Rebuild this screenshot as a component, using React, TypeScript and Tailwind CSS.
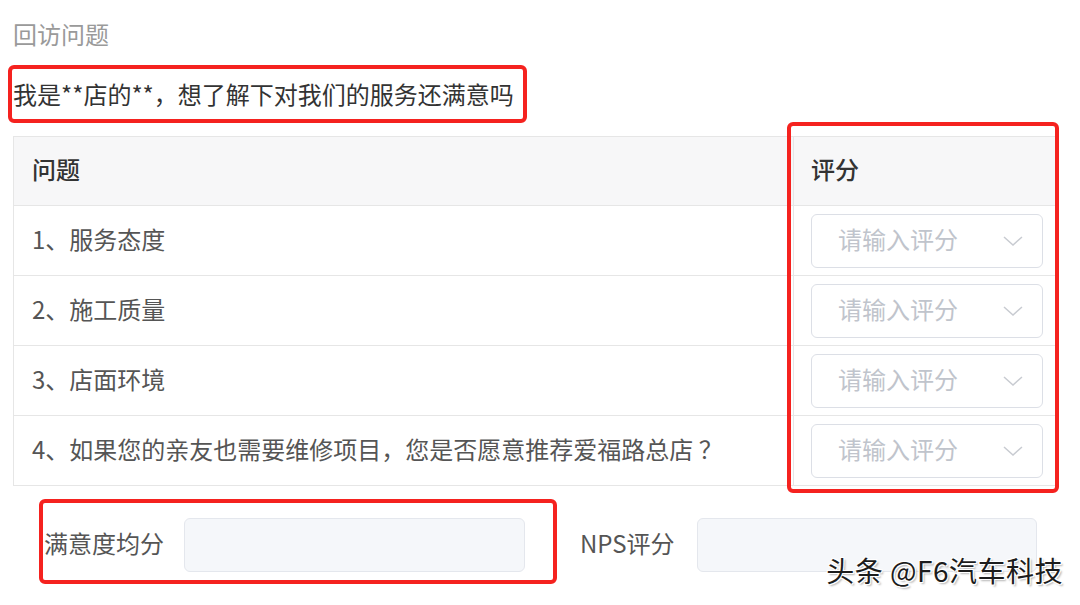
const rows = [
  '1、服务态度',
  '2、施工质量',
  '3、店面环境',
  '4、如果您的亲友也需要维修项目，您是否愿意推荐爱福路总店 ？',
];

function Chevron() {
  return (
    <svg width="20" height="10" viewBox="0 0 20 10" fill="none">
      <polyline points="1,1 10,9 19,1" stroke="#c8cbd1" strokeWidth="1.5" />
    </svg>
  );
}

function ScoreSelect() {
  return (
    <div className="flex h-[54px] w-[232px] items-center justify-between rounded-md border border-[#dcdfe6] bg-white pl-[26px] pr-[19px]">
      <span className="pb-[4px] text-[24px] leading-none text-[#c0c4cc]">请输入评分</span>
      <Chevron />
    </div>
  );
}

export default function App() {
  return (
    <div className="relative h-[605px] w-[1080px] overflow-hidden bg-white pl-[13px] font-['Noto_Sans_CJK_SC','Noto_Sans',sans-serif]">
      <div className="pt-[20px] text-[24px] leading-[28px] text-[#9a9a9a]">回访问题</div>
      <div className="mt-[32px] text-[24px] leading-[28px] text-[#333]">
        我是**店的**，想了解下对我们的服务还满意吗
      </div>

      {/* table */}
      <div className="mt-[28px] w-[1043px] border border-b-0 border-[#e6e6e6]">
        <div className="flex h-[69px] border-b border-[#e6e6e6] bg-[#f7f7f8] text-[24px] font-medium text-[#333]">
          <div className="flex w-[779px] items-center pb-[4px] pl-[18px]">问题</div>
          <div className="flex flex-1 items-center border-l border-[#e6e6e6] pb-[4px] pl-[17px]">评分</div>
        </div>
        {rows.map((r) => (
          <div key={r} className="flex h-[70px] border-b border-[#e6e6e6] text-[24px] text-[#555]">
            <div className="flex w-[779px] items-center pb-[4px] pl-[18px]">{r}</div>
            <div className="flex flex-1 items-center border-l border-[#e6e6e6] pl-[17px]">
              <ScoreSelect />
            </div>
          </div>
        ))}
      </div>

      {/* summary */}
      <div className="ml-[31px] mt-[32px] flex items-center text-[24px] text-[#555]">
        <span className="pb-[4px]">满意度均分</span>
        <div className="ml-[20px] h-[54px] w-[341px] rounded-md border border-[#e4e7ed] bg-[#f5f7fa]" />
        <span className="ml-[55px] pb-[4px]">NPS评分</span>
        <div className="ml-[22px] h-[54px] w-[340px] rounded-md border border-[#e4e7ed] bg-[#f5f7fa]" />
      </div>

      {/* annotation boxes */}
      <div className="absolute left-[8px] top-[65px] h-[58px] w-[519px] rounded-md border-4 border-[#f5221f]" />
      <div className="absolute left-[787px] top-[122px] h-[371px] w-[272px] rounded-md border-4 border-[#f5221f]" />
      <div className="absolute left-[39px] top-[499px] h-[85px] w-[518px] rounded-md border-4 border-[#f5221f]" />

      <div className="absolute right-[17px] top-[553px] text-[28px] leading-[34px] tracking-[0.5px] text-[#1c1c1c] [text-shadow:1px_1px_0_#fff,-1px_-1px_0_#fff,1px_-1px_0_#fff,-1px_1px_0_#fff,2px_2px_2px_rgba(0,0,0,0.3)]">
        头条 @F6汽车科技
      </div>
    </div>
  );
}
